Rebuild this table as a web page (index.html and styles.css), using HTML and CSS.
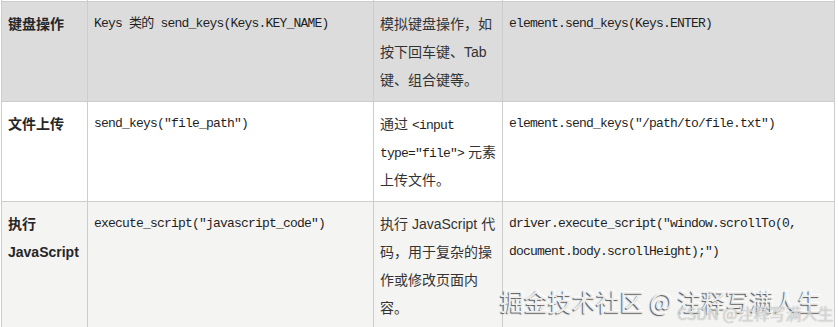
FILE: index.html
```html
<!DOCTYPE html>
<html lang="zh">
<head>
<meta charset="utf-8">
<title>Selenium 操作表</title>
<link rel="stylesheet" href="styles.css">
</head>
<body>
<div class="page">
  <table class="ops">
    <colgroup>
      <col class="c1"><col class="c2"><col class="c3"><col class="c4">
    </colgroup>
    <tbody>
      <tr class="prev"><td></td><td></td><td></td><td></td></tr>
      <tr class="gray">
        <td class="name">键盘操作</td>
        <td class="code">Keys 类的 send_keys(Keys.KEY_NAME)</td>
        <td class="desc">模拟键盘操作，如按下回车键、Tab 键、组合键等。</td>
        <td class="code">element.send_keys(Keys.ENTER)</td>
      </tr>
      <tr class="white">
        <td class="name">文件上传</td>
        <td class="code">send_keys("file_path")</td>
        <td class="desc">通过 <span class="mono">&lt;input type="file"&gt;</span> 元素上传文件。</td>
        <td class="code">element.send_keys("/path/to/file.txt")</td>
      </tr>
      <tr class="cream">
        <td class="name">执行 JavaScript</td>
        <td class="code">execute_script("javascript_code")</td>
        <td class="desc">执行 JavaScript 代码，用于复杂的操作或修改页面内容。</td>
        <td class="code">driver.execute_script("window.scrollTo(0, document.body.scrollHeight);")</td>
      </tr>
    </tbody>
  </table>
  <div class="mark">
    <div class="mark-main">掘金技术社区 @ 注释写满人生</div>
    <div class="mark-sub">CSDN @注释写满人生</div>
  </div>
</div>
</body>
</html>
```

FILE: styles.css
```css
html, body {
  margin: 0;
  padding: 0;
  background: #ffffff;
}
.page {
  position: relative;
  width: 838px;
  height: 327px;
  overflow: hidden;
  padding-left: 1px;
  box-sizing: border-box;
}
.ops {
  border-collapse: collapse;
  table-layout: fixed;
  width: 833px;
  font-family: "Liberation Sans", "Noto Sans CJK SC", sans-serif;
  font-size: 14px;
  line-height: 28px;
  color: #2b2b2b;
}
.c1 { width: 86px; }
.c2 { width: 286px; }
.c3 { width: 129px; }
.c4 { width: 332px; }
.ops td {
  border: 1px solid #cdcdcd;
  padding: 8px 3px 7px 6px;
  vertical-align: top;
  word-wrap: break-word;
}
.ops tr.prev td {
  height: 1px;
  padding: 0;
  line-height: 0;
  border-top: none;
  background: #ffffff;
}
.gray td { background: #dcdcdc; }
.white td { background: #ffffff; }
.cream td { background: #f4f4f2; }
.name {
  font-weight: bold;
  color: #262626;
}
.code, .mono {
  font-family: "Liberation Mono", "Noto Sans CJK SC", monospace;
  font-size: 13px;
  letter-spacing: -0.8px;
  color: #1f1f1f;
}
.mono {
  line-height: 1;
}
.desc {
  color: #333333;
}
.mark {
  position: absolute;
  left: 500px;
  top: 285px;
  width: 330px;
  height: 42px;
}
.mark-main {
  font-family: "Noto Sans CJK SC", sans-serif;
  font-size: 24px;
  line-height: 32px;
  color: #f0efed;
  text-shadow: -1px 1px 1px #555555, 1px -1px 0 #ffffff;
  white-space: nowrap;
}
.mark-sub {
  position: absolute;
  left: 177px;
  top: 18px;
  font-family: "Noto Sans CJK SC", sans-serif;
  font-size: 16px;
  line-height: 20px;
  color: rgba(255, 255, 255, 0.55);
  text-shadow: 0 0 1px #9a9a9a;
  white-space: nowrap;
}
```
